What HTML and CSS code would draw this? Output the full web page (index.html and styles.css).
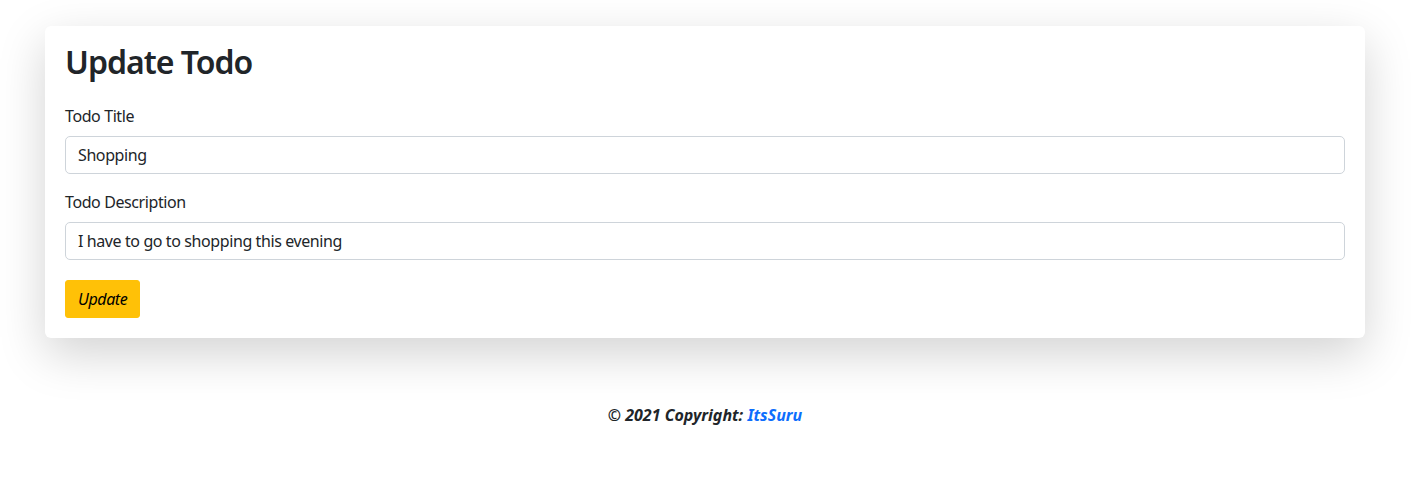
FILE: index.html
```html
<!DOCTYPE html>
<html lang="en">
<head>
<meta charset="utf-8">
<title>Update Todo</title>
<link rel="stylesheet" href="styles.css">
</head>
<body>
<div class="page">
  <main class="card">
    <h2 class="title">Update Todo</h2>
    <form class="form">
      <div class="field">
        <label class="label" for="title">Todo Title</label>
        <input class="input" id="title" type="text" value="Shopping">
      </div>
      <div class="field">
        <label class="label" for="desc">Todo Description</label>
        <input class="input" id="desc" type="text" value="I have to go to shopping this evening">
      </div>
      <button class="btn" type="button">Update</button>
    </form>
  </main>
  <footer class="footer">© 2021 Copyright: <a class="link" href="#">ItsSuru</a></footer>
</div>
</body>
</html>
```
FILE: styles.css
```css
* { box-sizing: border-box; }
html, body { margin: 0; padding: 0; background: #fff; }
body {
  font-family: "Noto Sans", sans-serif;
  font-size: 16px;
  line-height: 1.5;
  color: #212529;
}
.page {
  width: 1410px;
  display: flex;
  flex-direction: column;
  align-items: center;
  padding-top: 26px;
}
.card {
  width: 1320px;
  background: #fff;
  border-radius: 6px;
  padding: 20px;
  box-shadow: 0 16px 48px rgba(0,0,0,0.175);
  letter-spacing: -0.4px;
}
.title {
  margin: 0 0 26px;
  font-size: 32px;
  font-weight: 600;
  line-height: 32px;
  letter-spacing: -1px;
}
.form { display: flex; flex-direction: column; align-items: flex-start; }
.field { width: 100%; margin-bottom: 16px; display: flex; flex-direction: column; }
.field:nth-child(2) { margin-bottom: 20px; }
.label { margin-bottom: 8px; }
.input {
  width: 100%;
  height: 38px;
  padding: 6px 12px;
  font: inherit;
  letter-spacing: inherit;
  color: #212529;
  border: 1px solid #ced4da;
  border-radius: 5px;
  background: #fff;
}
.btn {
  height: 38px;
  padding: 6px 12px;
  font: inherit;
  font-style: italic;
  letter-spacing: inherit;
  color: #000;
  background: #ffc107;
  border: 1px solid #ffc107;
  border-radius: 3px;
}
.footer {
  margin-top: 65px;
  font-weight: 700;
  font-style: italic;
}
.link { color: #0d6efd; text-decoration: none; }
```
